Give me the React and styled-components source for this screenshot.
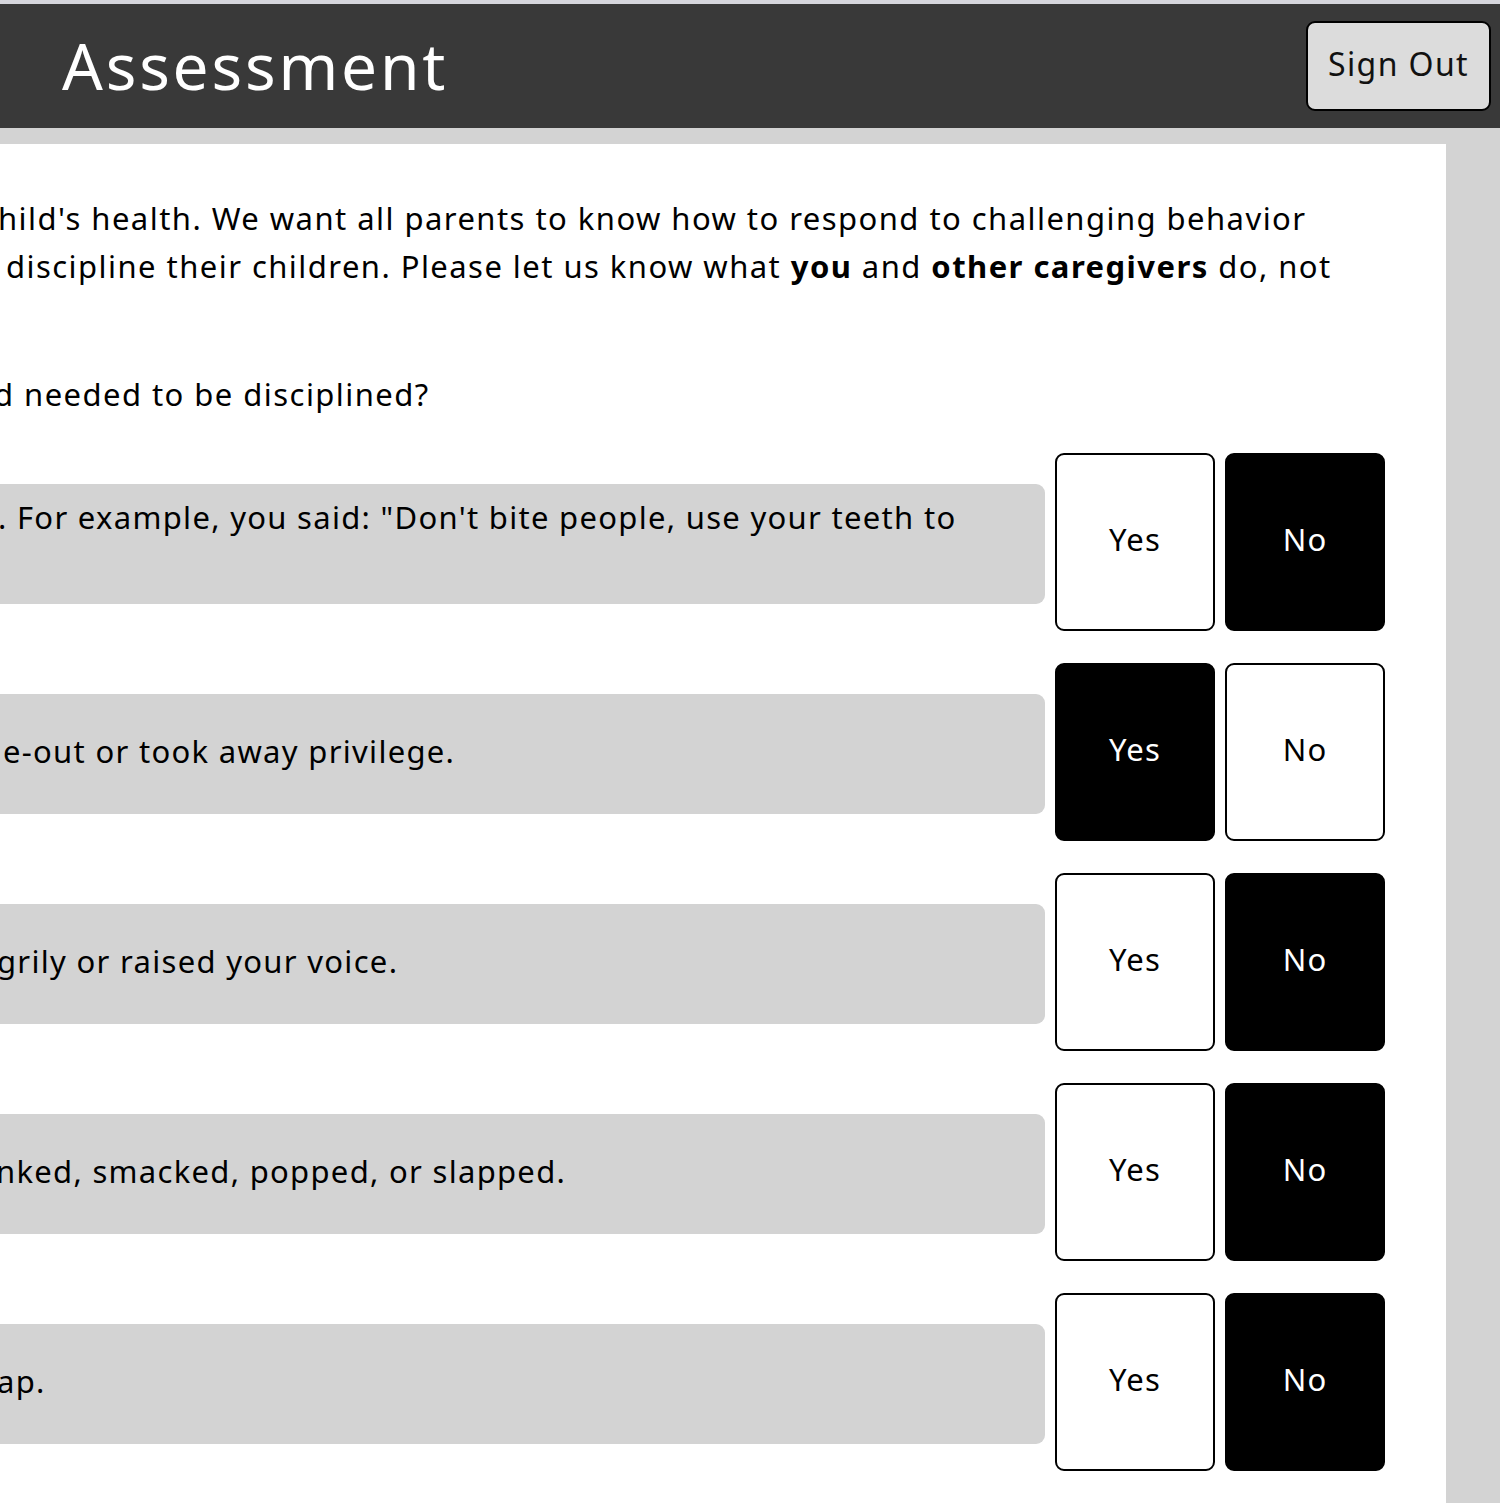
import React from "react";
import styled, { createGlobalStyle } from "styled-components";

const Global = createGlobalStyle`
  html, body { margin: 0; padding: 0; }
  body {
    background: #d3d3d3;
    font-family: "Noto Sans", "Liberation Sans", sans-serif;
    color: #000;
    overflow: hidden;
  }
`;

const TopEdge = styled.div`
  height: 4px;
  background: #d6d6dc;
`;

const Header = styled.header`
  height: 124px;
  background: #393939;
  display: flex;
  align-items: center;
  justify-content: space-between;
  padding: 0 9px 0 62px;
  box-sizing: border-box;
`;

const Title = styled.h1`
  margin: 0;
  color: #fff;
  font-weight: 400;
  font-size: 64px;
  letter-spacing: 2.8px;
  line-height: 1;
  margin-top: 0;
`;

const SignOut = styled.button`
  width: 185px;
  height: 90px;
  margin-top: -1px;
  background: #dcdcdc;
  border: 2px solid #000;
  border-radius: 9px;
  font-family: inherit;
  font-size: 32px;
  letter-spacing: 1.4px;
  color: #111;
  padding: 0 0 4px;
  cursor: pointer;
`;

const Page = styled.main`
  padding-top: 16px;
  display: flex;
`;

const Panel = styled.section`
  width: 1446px;
  min-height: 1400px;
  background: #fff;
  overflow: hidden;
  padding: 50px 61px 0 0;
  box-sizing: border-box;
`;

const Intro = styled.div`
  font-size: 31px;
  line-height: 48px;
  letter-spacing: 1.45px;
  white-space: nowrap;
  margin-bottom: 80px;
`;

const Line = styled.div`
  margin-left: ${(p) => p.$shift || 0}px;
`;

const Prompt = styled.div`
  font-size: 31px;
  line-height: 48px;
  letter-spacing: 1.45px;
  white-space: nowrap;
  margin-left: -6px;
  margin-bottom: 35px;
`;

const Rows = styled.div`
  display: flex;
  flex-direction: column;
  gap: 32px;
`;

const Row = styled.div`
  display: flex;
  align-items: center;
  gap: 10px;
`;

const Statement = styled.div`
  flex: 1;
  height: 120px;
  margin-top: 3px;
  padding-bottom: 6px;
  box-sizing: border-box;
  background: #d3d3d3;
  border-radius: 0 9px 9px 0;
  display: flex;
  align-items: center;
  font-size: 31px;
  line-height: 48px;
  letter-spacing: 1.3px;
  white-space: nowrap;
  overflow: hidden;
`;

const Choice = styled.button`
  width: 160px;
  height: 178px;
  flex: none;
  border: 2px solid #000;
  border-radius: 9px;
  background: ${(p) => (p.$on ? "#000" : "#fff")};
  color: ${(p) => (p.$on ? "#fff" : "#000")};
  font-family: inherit;
  font-size: 31px;
  letter-spacing: 1.2px;
  padding: 0 0 6px;
  cursor: pointer;
`;

const rows = [
  { text: [". For example, you said: \"Don't bite people, use your teeth to", "\u00a0"], pick: "no", shift: -2 },
  { text: ["e-out or took away privilege."], pick: "yes", shift: 3 },
  { text: ["grily or raised your voice."], pick: "no", shift: -3 },
  { text: ["nked, smacked, popped, or slapped."], pick: "no", shift: -4 },
  { text: ["ap."], pick: "no", shift: -3 },
  { text: ["\u00a0"], pick: "no", shift: 0 },
];

export default function App() {
  return (
    <>
      <Global />
      <TopEdge />
      <Header>
        <Title>Assessment</Title>
        <SignOut>Sign Out</SignOut>
      </Header>
      <Page>
        <Panel>
          <Intro>
            <Line $shift={-2}>hild's health. We want all parents to know how to respond to challenging behavior</Line>
            <Line $shift={6}>
              discipline their children. Please let us know what <b>you</b> and <b>other caregivers</b> do, not
            </Line>
          </Intro>
          <Prompt>d needed to be disciplined?</Prompt>
          <Rows>
            {rows.map((r, i) => (
              <Row key={i}>
                <Statement>
                  <Line $shift={r.shift}>
                    {r.text.map((t, j) => (
                      <div key={j}>{t}</div>
                    ))}
                  </Line>
                </Statement>
                <Choice $on={r.pick === "yes"}>Yes</Choice>
                <Choice $on={r.pick === "no"}>No</Choice>
              </Row>
            ))}
          </Rows>
        </Panel>
      </Page>
    </>
  );
}
